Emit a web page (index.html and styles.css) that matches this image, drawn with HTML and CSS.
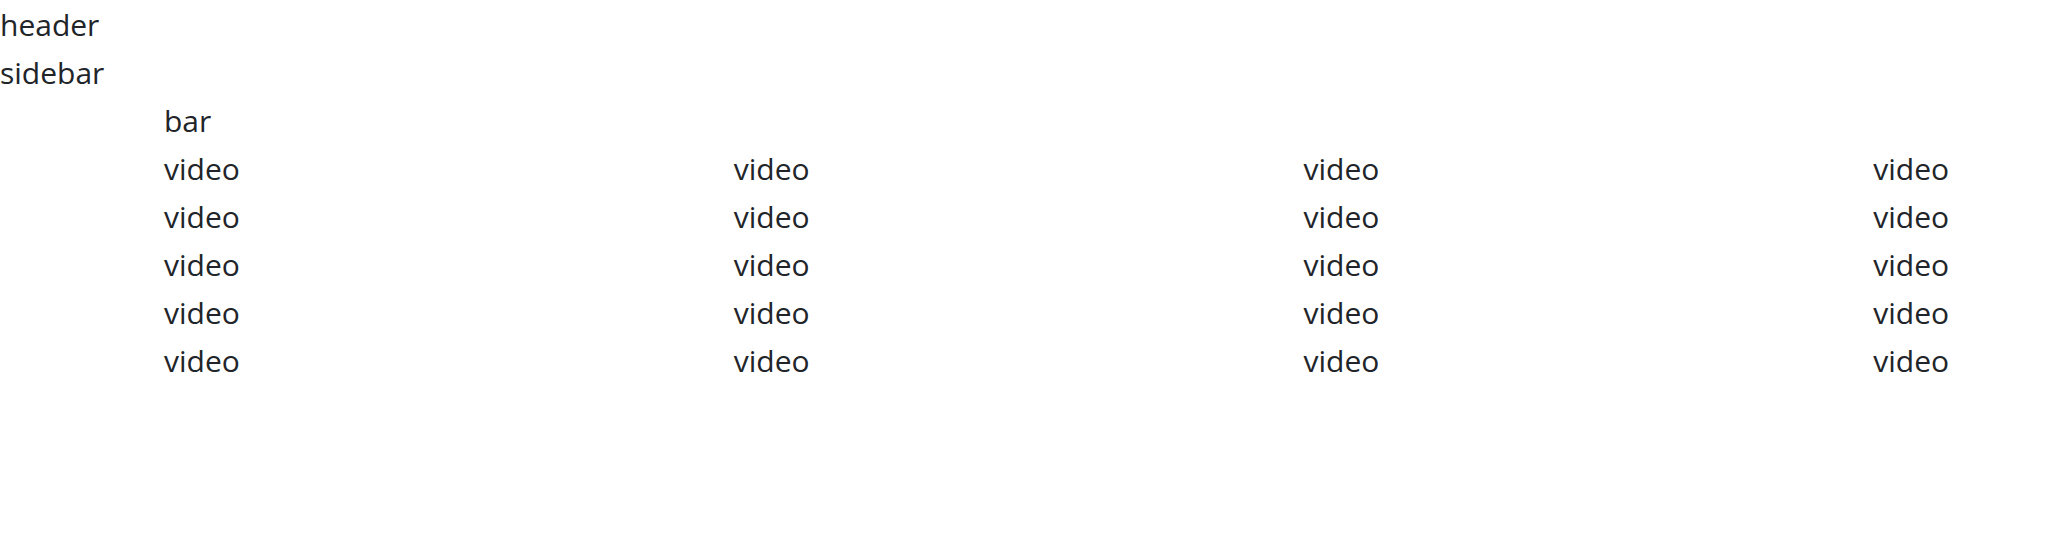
FILE: index.html
```html
<!DOCTYPE html>
<html lang="en">
<head>
<meta charset="utf-8">
<title>Layout</title>
<link rel="stylesheet" href="styles.css">
</head>
<body>
<div class="header">header</div>
<div class="sidebar">sidebar</div>
<main class="main">
  <div class="bar">bar</div>
  <div class="videos">
    <div class="video">video</div><div class="video">video</div><div class="video">video</div><div class="video">video</div>
    <div class="video">video</div><div class="video">video</div><div class="video">video</div><div class="video">video</div>
    <div class="video">video</div><div class="video">video</div><div class="video">video</div><div class="video">video</div>
    <div class="video">video</div><div class="video">video</div><div class="video">video</div><div class="video">video</div>
    <div class="video">video</div><div class="video">video</div><div class="video">video</div><div class="video">video</div>
  </div>
</main>
</body>
</html>
```
FILE: styles.css
```css
html, body {
  margin: 0;
  padding: 0;
  background: #ffffff;
}
body {
  font-family: "Open Sans", "Noto Sans", "Liberation Sans", sans-serif;
  font-size: 30px;
  line-height: 48px;
  color: #212529;
  overflow: hidden;
}
.header,
.sidebar,
.main {
  padding-top: 1px;
  margin-bottom: -1px;
}
.main {
  margin-left: 164px;
}
.videos {
  display: grid;
  grid-template-columns: repeat(4, 1fr);
  column-gap: 396px;
}
```
